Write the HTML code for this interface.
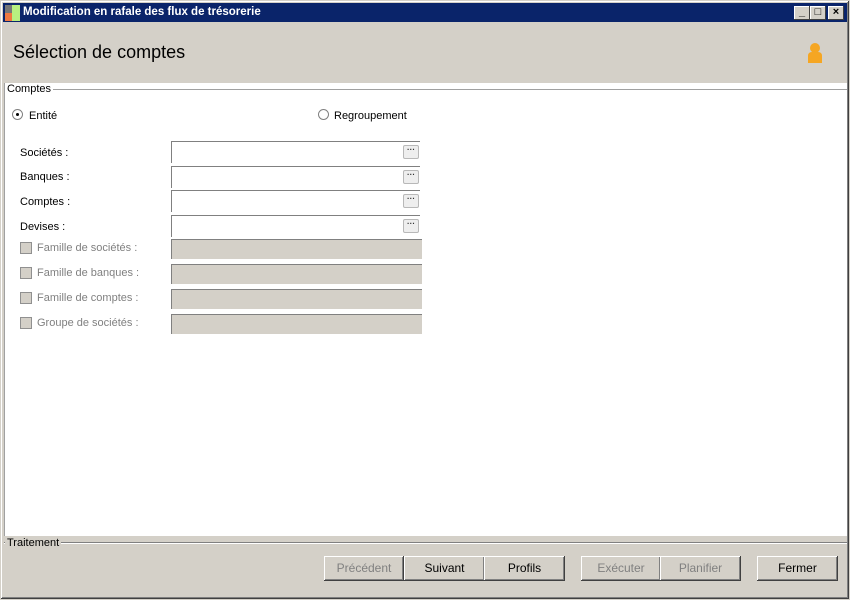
<!DOCTYPE html>
<html><head><meta charset="utf-8"><style>
*{box-sizing:border-box;margin:0;padding:0}
body{width:850px;height:600px;position:relative;overflow:hidden;background:#d4d0c8;font-family:"Liberation Sans",Tahoma,sans-serif;font-size:11px;color:#000}
.a{position:absolute}
.win{left:0;top:0;width:850px;height:600px;border:1px solid #d4d0c8;box-shadow:inset -1px -1px #404040,inset 1px 1px #fff,inset -2px -2px #808080}
.title{left:3px;top:3px;width:844px;height:19px;background:#0a246a;color:#fff;font-weight:bold;font-size:11.5px;line-height:19px;padding-left:20px}
.tb{top:6px;width:16px;height:14px;background:#d4d0c8;box-shadow:inset -1px -1px #404040,inset 1px 1px #fff;color:#000;font-size:11px;line-height:13px;text-align:center;font-weight:bold}
.white{left:4px;top:83px;width:843px;height:453px;background:#fff;border-left:1px solid #a0a0a0}
.lbl{font-size:11px}
.inp{height:22px;background:#fff;border-top:1px solid #808080;border-left:1px solid #808080}
.dots{width:16px;height:14px;border:1px solid #b8b8b8;border-radius:2px;background:#eee;font-size:8px;line-height:8px;text-align:center;color:#333;font-weight:bold}
.dis{height:20px;background:#d4d0c8;border-top:1px solid #808080;border-left:1px solid #808080}
.cb{width:12px;height:12px;background:#d4d0c8;border:1px solid #909090}
.gl{color:#808080}
.btn{top:556px;height:25px;background:#d4d0c8;box-shadow:inset -1px -1px #404040,inset 1px 1px #fff,inset -2px -2px #808080;text-align:center;line-height:24px;font-size:12px}
.rad{width:11px;height:11px;border-radius:50%;border:1px solid #808080;background:#fff}
</style></head><body>
<div class="a win"></div>
<div class="a title">Modification en rafale des flux de trésorerie</div>
<div class="a" style="left:5px;top:5px;width:7px;height:8px;background:#777"></div>
<div class="a" style="left:5px;top:13px;width:7px;height:8px;background:#f07840"></div>
<div class="a" style="left:12px;top:5px;width:8px;height:16px;background:#b8f080"></div>
<div class="a tb" style="left:794px">_</div>
<div class="a tb" style="left:810px">□</div>
<div class="a tb" style="left:828px">×</div>
<div class="a" style="left:13px;top:42px;font-size:18px">Sélection de comptes</div>
<svg class="a" style="left:806px;top:43px" width="18" height="22"><circle cx="9" cy="5" r="5" fill="#f5a623"/><path d="M2 20 L2 13 Q2 9 6 9 L12 9 Q16 9 16 13 L16 20 Z" fill="#f5a623"/></svg>
<div class="a white"></div>
<div class="a" style="left:4px;top:89px;width:843px;border-top:1px solid #a0a0a0"></div>
<div class="a" style="left:5px;top:83px;background:#fff;padding:0 2px;font-size:11px">Comptes</div>
<div class="a rad" style="left:12px;top:109px"><div style="margin:3px;width:3px;height:3px;background:#000;border-radius:50%"></div></div>
<div class="a lbl" style="left:29px;top:110px">Entité</div>
<div class="a rad" style="left:318px;top:109px"></div>
<div class="a lbl" style="left:334px;top:110px">Regroupement</div>
<div class="a lbl" style="left:20px;top:147px">Sociétés :</div>
<div class="a lbl" style="left:20px;top:171px">Banques :</div>
<div class="a lbl" style="left:20px;top:196px">Comptes :</div>
<div class="a lbl" style="left:20px;top:221px">Devises :</div>
<div class="a inp" style="left:171px;top:141px;width:249px"><div class="a dots" style="left:231px;top:3px">···</div></div>
<div class="a inp" style="left:171px;top:166px;width:249px"><div class="a dots" style="left:231px;top:3px">···</div></div>
<div class="a inp" style="left:171px;top:190px;width:249px"><div class="a dots" style="left:231px;top:3px">···</div></div>
<div class="a inp" style="left:171px;top:215px;width:249px"><div class="a dots" style="left:231px;top:3px">···</div></div>
<div class="a cb" style="left:20px;top:242px"></div><div class="a lbl gl" style="left:37px;top:242px">Famille de sociétés :</div>
<div class="a cb" style="left:20px;top:267px"></div><div class="a lbl gl" style="left:37px;top:267px">Famille de banques :</div>
<div class="a cb" style="left:20px;top:292px"></div><div class="a lbl gl" style="left:37px;top:292px">Famille de comptes :</div>
<div class="a cb" style="left:20px;top:317px"></div><div class="a lbl gl" style="left:37px;top:317px">Groupe de sociétés :</div>
<div class="a dis" style="left:171px;top:239px;width:251px"></div>
<div class="a dis" style="left:171px;top:264px;width:251px"></div>
<div class="a dis" style="left:171px;top:289px;width:251px"></div>
<div class="a dis" style="left:171px;top:314px;width:251px"></div>
<div class="a" style="left:4px;top:542px;width:843px;border-top:1px solid #808080;border-bottom:1px solid #fff"></div>
<div class="a" style="left:5px;top:537px;background:#d4d0c8;padding:0 2px;font-size:11px">Traitement</div>
<div class="a btn gl" style="left:324px;width:80px">Précédent</div>
<div class="a btn" style="left:404px;width:81px">Suivant</div>
<div class="a btn" style="left:484px;width:81px">Profils</div>
<div class="a btn gl" style="left:581px;width:80px">Exécuter</div>
<div class="a btn gl" style="left:660px;width:81px">Planifier</div>
<div class="a btn" style="left:757px;width:81px">Fermer</div>
</body></html>
